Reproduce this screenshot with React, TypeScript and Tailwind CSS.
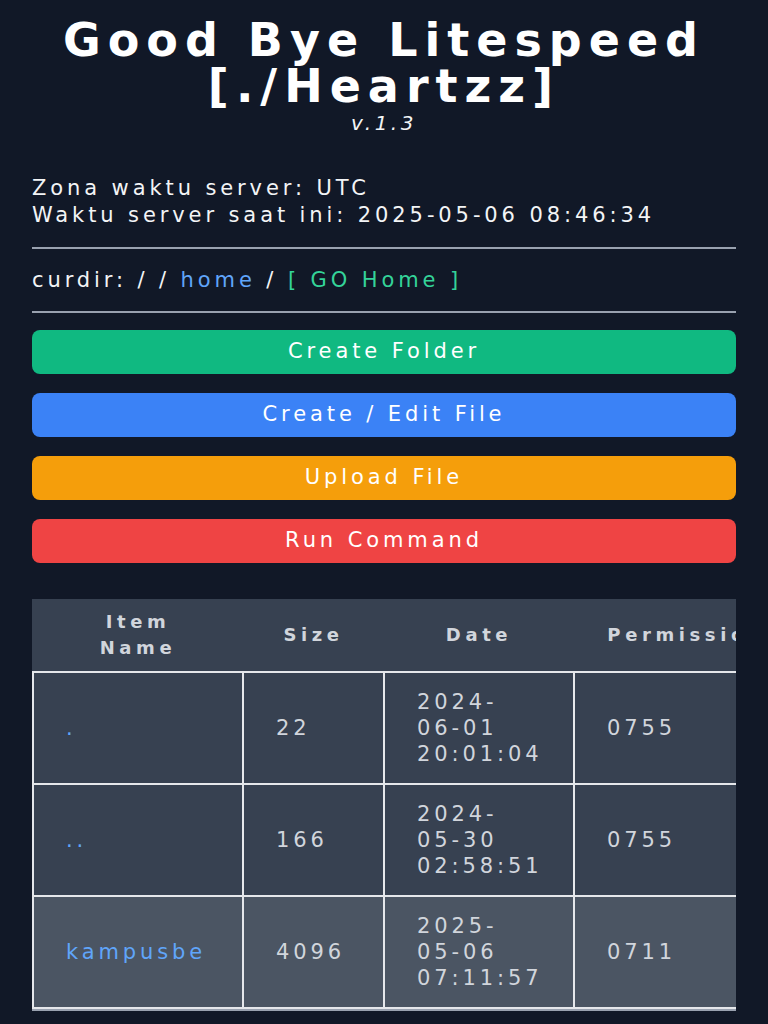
import React from "react";

type Row = {
  name: string;
  size: string;
  date: [string, string, string];
  perm: string;
  alt?: boolean;
};

const rows: Row[] = [
  { name: ".", size: "22", date: ["2024-", "06-01", "20:01:04"], perm: "0755" },
  { name: "..", size: "166", date: ["2024-", "05-30", "02:58:51"], perm: "0755" },
  { name: "kampusbe", size: "4096", date: ["2025-", "05-06", "07:11:57"], perm: "0711", alt: true },
];

const buttons = [
  { label: "Create Folder", cls: "bg-[#10b981]" },
  { label: "Create / Edit File", cls: "bg-[#3b82f6]" },
  { label: "Upload File", cls: "bg-[#f59e0b]" },
  { label: "Run Command", cls: "bg-[#ef4444]" },
];

export default function App() {
  return (
    <div className="min-h-screen bg-[#111827] px-8 pt-[17px] pb-10 font-['DejaVu_Sans',sans-serif] text-[21px] tracking-[3.9px] text-white">
      {/* Header */}
      <h1 className="text-center text-[46px] font-bold leading-[46px] tracking-[7px]">
        Good Bye Litespeed
        <br />
        [./Heartzz]
      </h1>
      <p className="text-center text-[20px] italic leading-[28px] tracking-[3.5px] text-gray-100">v.1.3</p>

      {/* Server info */}
      <div className="mt-[38px] leading-[27px] text-gray-100">
        <p>Zona waktu server: UTC</p>
        <p>Waktu server saat ini: 2025-05-06 08:46:34</p>
      </div>

      <hr className="mt-[18px] border-t-2 border-gray-400" />

      <p className="mt-[17px] leading-[28px] text-gray-100">
        curdir: / / <a className="text-[#60a5fa]">home</a> /{" "}
        <a className="text-[#34d399]">[ GO Home ]</a>
      </p>

      <hr className="mt-[17px] border-t-2 border-gray-400" />

      {/* Actions */}
      <div className="mt-[17px] flex flex-col gap-[19px]">
        {buttons.map((b) => (
          <button
            key={b.label}
            className={`h-11 w-full rounded-lg text-center text-[21px] text-white ${b.cls}`}
          >
            {b.label}
          </button>
        ))}
      </div>

      {/* File table */}
      <div className="mt-9 overflow-hidden border-b-2 border-gray-400">
        <table className="w-[1081px] table-fixed bg-[#374151] text-gray-300">
          <thead>
            <tr>
              <th className="w-[210px] px-8 py-[10px] text-center text-[18px] font-bold leading-[26px] tracking-[4.6px]">
                Item Name
              </th>
              <th className="w-[141px] px-8 py-[10px] text-center text-[18px] font-bold leading-[26px] tracking-[4.6px]">
                Size
              </th>
              <th className="w-[190px] px-8 py-[10px] text-center text-[18px] font-bold leading-[26px] tracking-[4.6px]">
                Date
              </th>
              <th className="w-[240px] px-8 py-[10px] text-center text-[18px] font-bold leading-[26px] tracking-[4.6px]">
                Permissions
              </th>
              <th className="w-[300px] px-8 py-[10px] text-center text-[18px] font-bold leading-[26px] tracking-[4.6px]">
                Actions
              </th>
            </tr>
          </thead>
          <tbody>
            {rows.map((r) => (
              <tr key={r.name} className={r.alt ? "bg-[#4b5563]" : "bg-[#374151]"}>
                <td className="border-2 border-gray-200 px-8 py-4 leading-[26px]">
                  <a className="text-[#60a5fa]">{r.name}</a>
                </td>
                <td className="border-2 border-gray-200 px-8 py-4 leading-[26px]">{r.size}</td>
                <td className="border-2 border-gray-200 px-8 py-4 leading-[26px]">
                  {r.date[0]}
                  <br />
                  {r.date[1]}
                  <br />
                  {r.date[2]}
                </td>
                <td className="border-2 border-gray-200 px-8 py-4 leading-[26px]">{r.perm}</td>
                <td className="border-2 border-gray-200 px-8 py-4 leading-[26px]">
                  <a className="text-[#60a5fa]">Edit</a> | <a className="text-[#f87171]">Delete</a>
                </td>
              </tr>
            ))}
          </tbody>
        </table>
      </div>
    </div>
  );
}
